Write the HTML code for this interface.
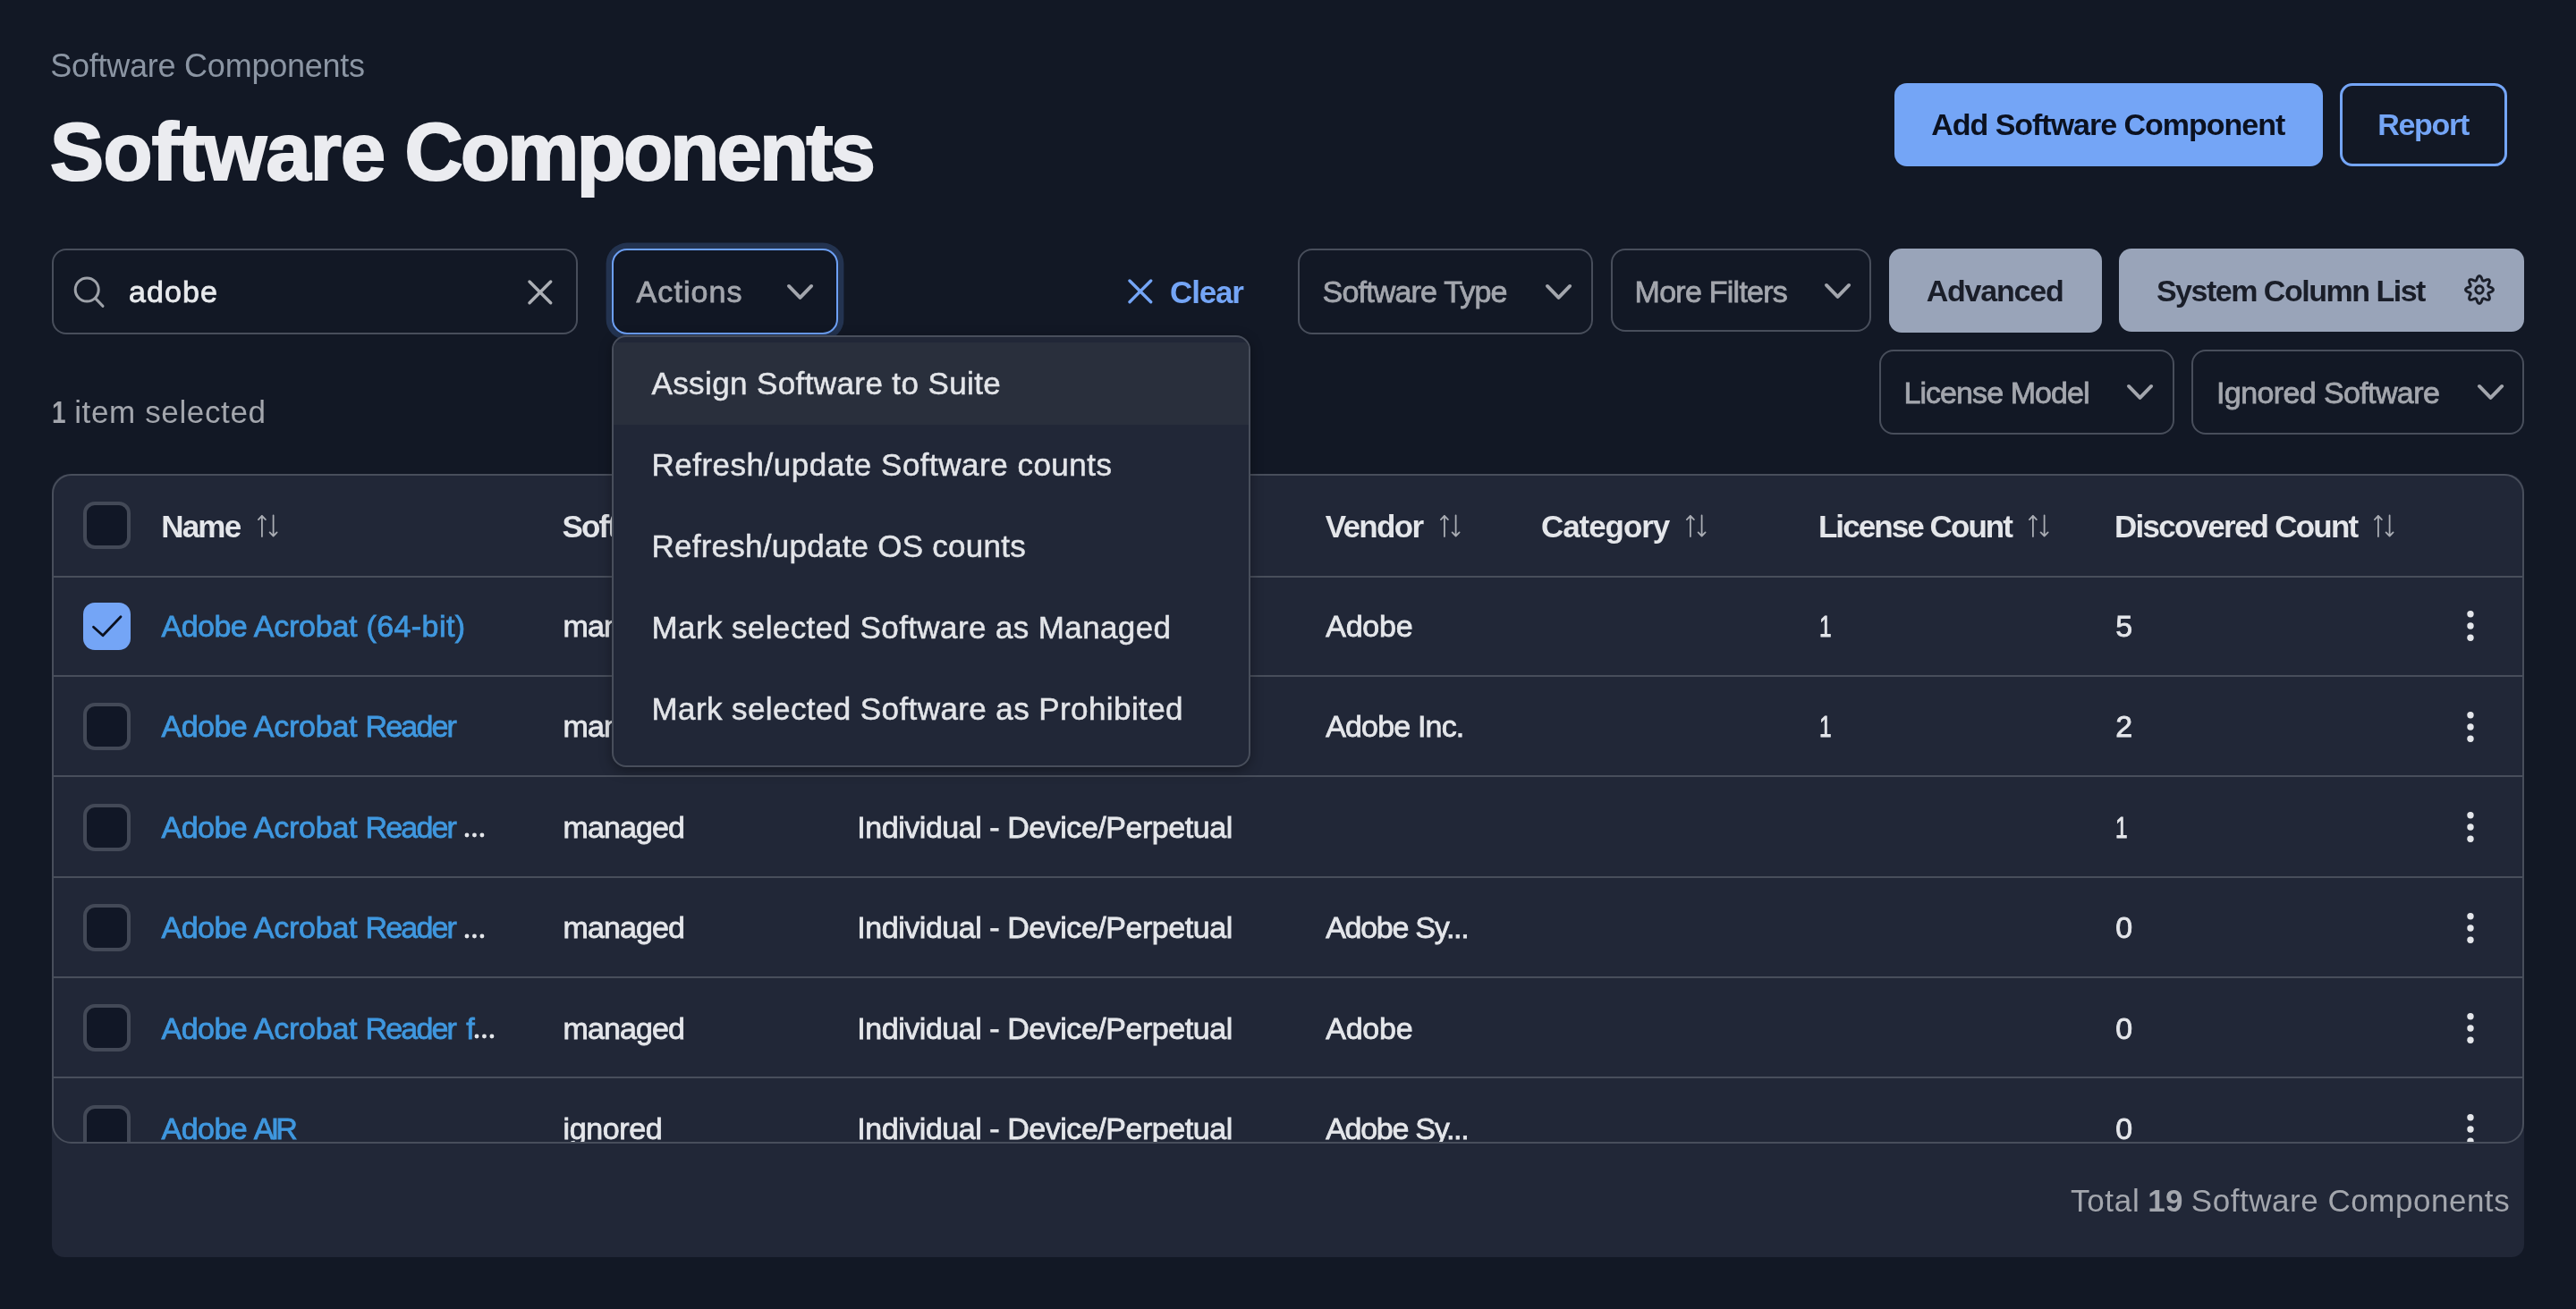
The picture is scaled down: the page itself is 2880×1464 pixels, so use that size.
<!DOCTYPE html>
<html lang="en"><head><meta charset="utf-8"><title>Software Components</title><style>
html,body{margin:0;padding:0}
body{width:2880px;height:1464px;overflow:hidden;background:#121825;font-family:"Liberation Sans",sans-serif;position:relative}
#app{position:absolute;left:0;top:0;width:2880px;height:1464px;will-change:transform;filter:blur(0.55px)}
.t{position:absolute;white-space:nowrap;line-height:1;font-weight:400}
.bx{position:absolute;box-sizing:border-box}
.a{position:absolute;overflow:visible}
.sep{position:absolute;left:0;width:2760px;height:2px;background:#484e5b}
.cb{position:absolute;box-sizing:border-box;width:53px;height:53px;border:4px solid #434957;border-radius:13px;background:#111726}
.cb.on{border:0;background:#74a5f6}
.cb svg{display:block}
</style></head>
<body>
<div id="app">
<span class="t" style="left:56.2px;top:56.1px;font-size:36px;color:#8b95a3;letter-spacing:-0.24px;">Software Components</span>
<span class="t h1" style="left:56.1px;top:124.8px;font-size:90px;color:#ebecf0;font-weight:700;letter-spacing:-0.73px;-webkit-text-stroke:2.2px #ebecf0;">Software</span>
<span class="t h1" style="left:452.5px;top:124.8px;font-size:90px;color:#ebecf0;font-weight:700;letter-spacing:-2.62px;-webkit-text-stroke:2.2px #ebecf0;">Components</span>
<div class="bx" style="left:2118px;top:93px;width:479px;height:93px;background:#74a5f6;border-radius:14px;"></div>
<span class="t" style="left:2159.2px;top:121.9px;font-size:34px;color:#0b1120;font-weight:700;letter-spacing:-1.02px;">Add Software Component</span>
<div class="bx" style="left:2616px;top:93px;width:187px;height:93px;border:3px solid #74a5f6;border-radius:14px;"></div>
<span class="t" style="left:2658.2px;top:121.9px;font-size:34px;color:#74a5f6;font-weight:700;letter-spacing:-1.28px;">Report</span>
<div class="bx" style="left:58px;top:278px;width:588px;height:96px;border:2px solid #484e5b;border-radius:16px;"></div>
<svg class="a" style="left:80px;top:307px" width="40" height="40" viewBox="0 0 40 40"><circle cx="17.2" cy="17" r="13" fill="none" stroke="#9ea2a9" stroke-width="3"/><path d="M26.6 26.6 L35 35.4" stroke="#9ea2a9" stroke-width="3" stroke-linecap="round"/></svg>
<span class="t" style="left:143.9px;top:309.1px;font-size:34px;color:#e8eaed;letter-spacing:1.10px;-webkit-text-stroke:0.8px #e8eaed;">adobe</span>
<svg class="a" style="left:588.7px;top:311.7px" width="29.7" height="29.7" viewBox="-3 -3 29.7 29.7"><path d="M0 0 L23.7 23.7 M23.7 0 L0 23.7" fill="none" stroke="#acafb5" stroke-width="3.5" stroke-linecap="round"/></svg>
<div class="bx" style="left:684px;top:277.8px;width:253.3px;height:96.2px;border:2.6px solid #6da0f4;border-radius:17px;box-shadow:0 0 0 6.4px #233350;background:#111724;"></div>
<span class="t" style="left:711.6px;top:309.1px;font-size:34px;color:#a3a6ad;letter-spacing:1.07px;-webkit-text-stroke:0.8px #a3a6ad;">Actions</span>
<svg class="a" style="left:880.0px;top:317.6px" width="29.1" height="16.8" viewBox="0 0 29.1 16.8"><path d="M1.95 1.95 L14.55 14.85 L27.15 1.95" fill="none" stroke="#a3a6ad" stroke-width="3.9" stroke-linecap="round" stroke-linejoin="round"/></svg>
<svg class="a" style="left:1259.7px;top:310.5px" width="29.7" height="29.7" viewBox="-3 -3 29.7 29.7"><path d="M0 0 L23.7 23.7 M23.7 0 L0 23.7" fill="none" stroke="#74a5f6" stroke-width="3.4" stroke-linecap="round"/></svg>
<span class="t" style="left:1308.0px;top:308.5px;font-size:35px;color:#74a5f6;font-weight:700;letter-spacing:-1.15px;">Clear</span>
<div class="bx" style="left:1451px;top:278px;width:330px;height:96px;border:2px solid #484e5b;border-radius:16px;"></div>
<span class="t" style="left:1478.6px;top:309.1px;font-size:34px;color:#a3a6ad;letter-spacing:-0.82px;-webkit-text-stroke:0.8px #a3a6ad;">Software Type</span>
<svg class="a" style="left:1728.1px;top:317.6px" width="29.1" height="16.8" viewBox="0 0 29.1 16.8"><path d="M1.95 1.95 L14.55 14.85 L27.15 1.95" fill="none" stroke="#a3a6ad" stroke-width="3.9" stroke-linecap="round" stroke-linejoin="round"/></svg>
<div class="bx" style="left:1801px;top:278px;width:291px;height:93px;border:2px solid #484e5b;border-radius:16px;"></div>
<span class="t" style="left:1827.6px;top:309.1px;font-size:34px;color:#a3a6ad;letter-spacing:-0.75px;-webkit-text-stroke:0.8px #a3a6ad;">More Filters</span>
<svg class="a" style="left:2040.2px;top:317.2px" width="29.1" height="16.8" viewBox="0 0 29.1 16.8"><path d="M1.95 1.95 L14.55 14.85 L27.15 1.95" fill="none" stroke="#a3a6ad" stroke-width="3.9" stroke-linecap="round" stroke-linejoin="round"/></svg>
<div class="bx" style="left:2112px;top:278px;width:238px;height:94px;background:#99a4b9;border-radius:14px;"></div>
<span class="t" style="left:2153.7px;top:308.2px;font-size:34px;color:#1a1e29;font-weight:700;letter-spacing:-1.20px;">Advanced</span>
<div class="bx" style="left:2369px;top:278px;width:453px;height:93px;background:#99a4b9;border-radius:14px;"></div>
<span class="t" style="left:2410.9px;top:308.2px;font-size:34px;color:#1a1e29;font-weight:700;letter-spacing:-1.49px;">System Column List</span>
<svg class="a" style="left:2752.1px;top:304.2px" width="40" height="40" viewBox="-20 -20 40 40"><g fill="none" stroke="#1a1e29" stroke-width="2.9" stroke-linejoin="round"><path d="M0.00 -15.45 L0.60 -15.32 L1.18 -14.95 L1.70 -14.36 L2.16 -13.62 L2.55 -12.80 L2.83 -11.78 L3.12 -11.05 L3.41 -10.48 L3.72 -10.08 L4.08 -9.84 L4.50 -9.76 L5.00 -9.82 L5.61 -10.02 L6.33 -10.33 L7.25 -10.85 L8.11 -11.16 L8.95 -11.36 L9.74 -11.40 L10.41 -11.26 L10.92 -10.92 L11.26 -10.41 L11.40 -9.74 L11.36 -8.95 L11.16 -8.11 L10.85 -7.25 L10.33 -6.33 L10.02 -5.61 L9.82 -5.00 L9.76 -4.50 L9.84 -4.08 L10.08 -3.72 L10.48 -3.41 L11.05 -3.12 L11.78 -2.83 L12.80 -2.55 L13.62 -2.16 L14.36 -1.70 L14.95 -1.18 L15.32 -0.60 L15.45 -0.00 L15.32 0.60 L14.95 1.18 L14.36 1.70 L13.62 2.16 L12.80 2.55 L11.78 2.83 L11.05 3.12 L10.48 3.41 L10.08 3.72 L9.84 4.08 L9.76 4.50 L9.82 5.00 L10.02 5.61 L10.33 6.33 L10.85 7.25 L11.16 8.11 L11.36 8.95 L11.40 9.74 L11.26 10.41 L10.92 10.92 L10.41 11.26 L9.74 11.40 L8.95 11.36 L8.11 11.16 L7.25 10.85 L6.33 10.33 L5.61 10.02 L5.00 9.82 L4.50 9.76 L4.08 9.84 L3.72 10.08 L3.41 10.48 L3.12 11.05 L2.83 11.78 L2.55 12.80 L2.16 13.62 L1.70 14.36 L1.18 14.95 L0.60 15.32 L0.00 15.45 L-0.60 15.32 L-1.18 14.95 L-1.70 14.36 L-2.16 13.62 L-2.55 12.80 L-2.83 11.78 L-3.12 11.05 L-3.41 10.48 L-3.72 10.08 L-4.08 9.84 L-4.50 9.76 L-5.00 9.82 L-5.61 10.02 L-6.33 10.33 L-7.25 10.85 L-8.11 11.16 L-8.95 11.36 L-9.74 11.40 L-10.41 11.26 L-10.92 10.92 L-11.26 10.41 L-11.40 9.74 L-11.36 8.95 L-11.16 8.11 L-10.85 7.25 L-10.33 6.33 L-10.02 5.61 L-9.82 5.00 L-9.76 4.50 L-9.84 4.08 L-10.08 3.72 L-10.48 3.41 L-11.05 3.12 L-11.78 2.83 L-12.80 2.55 L-13.62 2.16 L-14.36 1.70 L-14.95 1.18 L-15.32 0.60 L-15.45 0.00 L-15.32 -0.60 L-14.95 -1.18 L-14.36 -1.70 L-13.62 -2.16 L-12.80 -2.55 L-11.78 -2.83 L-11.05 -3.12 L-10.48 -3.41 L-10.08 -3.72 L-9.84 -4.08 L-9.76 -4.50 L-9.82 -5.00 L-10.02 -5.61 L-10.33 -6.33 L-10.85 -7.25 L-11.16 -8.11 L-11.36 -8.95 L-11.40 -9.74 L-11.26 -10.41 L-10.92 -10.92 L-10.41 -11.26 L-9.74 -11.40 L-8.95 -11.36 L-8.11 -11.16 L-7.25 -10.85 L-6.33 -10.33 L-5.61 -10.02 L-5.00 -9.82 L-4.50 -9.76 L-4.08 -9.84 L-3.72 -10.08 L-3.41 -10.48 L-3.12 -11.05 L-2.83 -11.78 L-2.55 -12.80 L-2.16 -13.62 L-1.70 -14.36 L-1.18 -14.95 L-0.60 -15.32Z"/><circle cx="0" cy="0" r="4.2"/></g></svg>
<div class="bx" style="left:2101px;top:391px;width:330px;height:95px;border:2px solid #484e5b;border-radius:16px;"></div>
<span class="t" style="left:2128.4px;top:422.2px;font-size:34px;color:#a3a6ad;letter-spacing:-0.92px;-webkit-text-stroke:0.8px #a3a6ad;">License Model</span>
<svg class="a" style="left:2378.0px;top:430.4px" width="29.1" height="16.8" viewBox="0 0 29.1 16.8"><path d="M1.95 1.95 L14.55 14.85 L27.15 1.95" fill="none" stroke="#a3a6ad" stroke-width="3.9" stroke-linecap="round" stroke-linejoin="round"/></svg>
<div class="bx" style="left:2450px;top:391px;width:372px;height:95px;border:2px solid #484e5b;border-radius:16px;"></div>
<span class="t" style="left:2478.0px;top:422.2px;font-size:34px;color:#a3a6ad;letter-spacing:-0.61px;-webkit-text-stroke:0.8px #a3a6ad;">Ignored Software</span>
<svg class="a" style="left:2770.0px;top:430.4px" width="29.1" height="16.8" viewBox="0 0 29.1 16.8"><path d="M1.95 1.95 L14.55 14.85 L27.15 1.95" fill="none" stroke="#a3a6ad" stroke-width="3.9" stroke-linecap="round" stroke-linejoin="round"/></svg>
<span class="t" style="left:58.0px;top:442.9px;font-size:35px;color:#a3a6ad;font-weight:700;transform:scaleX(.8);transform-origin:0 0;">1</span>
<span class="t" style="left:83.2px;top:442.9px;font-size:35px;color:#a3a6ad;letter-spacing:0.63px;">item selected</span>
<div class="bx" style="left:58px;top:530px;width:2764px;height:876px;background:#212737;border-radius:20px 20px 14px 14px;"></div>
<div class="bx" id="tbl" style="left:58px;top:530px;width:2764px;height:749px;border:2px solid #484e5b;border-radius:22px;overflow:hidden;">
<div class="sep" style="top:111.9px"></div>
<div class="sep" style="top:222.9px"></div>
<div class="sep" style="top:335.4px"></div>
<div class="sep" style="top:447.9px"></div>
<div class="sep" style="top:559.8px"></div>
<div class="sep" style="top:672.3px"></div>
<div class="cb" style="left:33px;top:29.0px"></div>
<span class="t" style="left:120.2px;top:38.6px;font-size:35px;color:#e4e6ea;font-weight:700;letter-spacing:-1.80px;">Name</span>
<svg class="a" style="left:227.0px;top:42.9px" width="25" height="27" viewBox="-1 -1 25 27"><g fill="none" stroke="#a9acb3" stroke-width="1.8" stroke-linecap="round" stroke-linejoin="round"><path d="M4.9 24 V1 M0.9 5.1 L4.9 1 L8.9 5.1"/><path d="M17.6 0.5 V23.5 M13.6 19.4 L17.6 23.5 L21.6 19.4"/></g></svg>
<span class="t" style="left:568.6px;top:38.6px;font-size:35px;color:#e4e6ea;font-weight:700;letter-spacing:-1.87px;">Software Type</span>
<svg class="a" style="left:801.0px;top:42.9px" width="25" height="27" viewBox="-1 -1 25 27"><g fill="none" stroke="#a9acb3" stroke-width="1.8" stroke-linecap="round" stroke-linejoin="round"><path d="M4.9 24 V1 M0.9 5.1 L4.9 1 L8.9 5.1"/><path d="M17.6 0.5 V23.5 M13.6 19.4 L17.6 23.5 L21.6 19.4"/></g></svg>
<span class="t" style="left:897.9px;top:38.6px;font-size:35px;color:#e4e6ea;font-weight:700;letter-spacing:-2.20px;">License Model</span>
<svg class="a" style="left:1129.0px;top:42.9px" width="25" height="27" viewBox="-1 -1 25 27"><g fill="none" stroke="#a9acb3" stroke-width="1.8" stroke-linecap="round" stroke-linejoin="round"><path d="M4.9 24 V1 M0.9 5.1 L4.9 1 L8.9 5.1"/><path d="M17.6 0.5 V23.5 M13.6 19.4 L17.6 23.5 L21.6 19.4"/></g></svg>
<span class="t" style="left:1421.8px;top:38.6px;font-size:35px;color:#e4e6ea;font-weight:700;letter-spacing:-1.68px;">Vendor</span>
<svg class="a" style="left:1549.0px;top:42.9px" width="25" height="27" viewBox="-1 -1 25 27"><g fill="none" stroke="#a9acb3" stroke-width="1.8" stroke-linecap="round" stroke-linejoin="round"><path d="M4.9 24 V1 M0.9 5.1 L4.9 1 L8.9 5.1"/><path d="M17.6 0.5 V23.5 M13.6 19.4 L17.6 23.5 L21.6 19.4"/></g></svg>
<span class="t" style="left:1663.0px;top:38.6px;font-size:35px;color:#e4e6ea;font-weight:700;letter-spacing:-1.06px;">Category</span>
<svg class="a" style="left:1824.0px;top:42.9px" width="25" height="27" viewBox="-1 -1 25 27"><g fill="none" stroke="#a9acb3" stroke-width="1.8" stroke-linecap="round" stroke-linejoin="round"><path d="M4.9 24 V1 M0.9 5.1 L4.9 1 L8.9 5.1"/><path d="M17.6 0.5 V23.5 M13.6 19.4 L17.6 23.5 L21.6 19.4"/></g></svg>
<span class="t" style="left:1972.9px;top:38.6px;font-size:35px;color:#e4e6ea;font-weight:700;letter-spacing:-1.92px;">License Count</span>
<svg class="a" style="left:2207.0px;top:42.9px" width="25" height="27" viewBox="-1 -1 25 27"><g fill="none" stroke="#a9acb3" stroke-width="1.8" stroke-linecap="round" stroke-linejoin="round"><path d="M4.9 24 V1 M0.9 5.1 L4.9 1 L8.9 5.1"/><path d="M17.6 0.5 V23.5 M13.6 19.4 L17.6 23.5 L21.6 19.4"/></g></svg>
<span class="t" style="left:2304.1px;top:38.6px;font-size:35px;color:#e4e6ea;font-weight:700;letter-spacing:-1.76px;">Discovered Count</span>
<svg class="a" style="left:2593.2px;top:42.9px" width="25" height="27" viewBox="-1 -1 25 27"><g fill="none" stroke="#a9acb3" stroke-width="1.8" stroke-linecap="round" stroke-linejoin="round"><path d="M4.9 24 V1 M0.9 5.1 L4.9 1 L8.9 5.1"/><path d="M17.6 0.5 V23.5 M13.6 19.4 L17.6 23.5 L21.6 19.4"/></g></svg>
<div class="cb on" style="left:33px;top:141.6px"><svg width="53" height="53" viewBox="0 0 53 53"><path d="M11.5 27.3 L22 36.8 L42 15.8" fill="none" stroke="#0b1120" stroke-width="2.8" stroke-linecap="round" stroke-linejoin="round"/></svg></div>
<span class="t" style="left:120.6px;top:150.9px;font-size:34px;color:#3f97de;letter-spacing:-0.57px;-webkit-text-stroke:0.8px #3f97de;">Adobe</span>
<span class="t" style="left:223.7px;top:150.9px;font-size:34px;color:#3f97de;letter-spacing:-0.22px;-webkit-text-stroke:0.8px #3f97de;">Acrobat</span>
<span class="t" style="left:349.4px;top:150.9px;font-size:34px;color:#3f97de;letter-spacing:0.44px;-webkit-text-stroke:0.8px #3f97de;">(64-bit)</span>
<span class="t" style="left:569.5px;top:150.9px;font-size:34px;color:#e4e6ea;letter-spacing:-0.90px;-webkit-text-stroke:0.8px #e4e6ea;">managed</span>
<span class="t" style="left:898.3px;top:150.9px;font-size:34px;color:#e4e6ea;letter-spacing:-0.46px;-webkit-text-stroke:0.8px #e4e6ea;">Individual - Device/Perpetual</span>
<span class="t" style="left:1422.2px;top:150.9px;font-size:34px;color:#e4e6ea;letter-spacing:-0.20px;-webkit-text-stroke:0.8px #e4e6ea;">Adobe</span>
<span class="t" style="left:1973.6px;top:150.9px;font-size:34px;color:#e4e6ea;-webkit-text-stroke:0.8px #e4e6ea;transform:scaleX(.72);transform-origin:0 0;">1</span>
<span class="t" style="left:2305.3px;top:150.9px;font-size:34px;color:#e4e6ea;-webkit-text-stroke:0.8px #e4e6ea;">5</span>
<svg class="a" style="left:2697.4px;top:150.3px" width="10" height="36" viewBox="-5 -18 10 36"><circle cx="0" cy="-13.2" r="3.7" fill="#e4e6ea"/><circle cx="0" cy="0" r="3.7" fill="#e4e6ea"/><circle cx="0" cy="13.2" r="3.7" fill="#e4e6ea"/></svg>
<div class="cb" style="left:33px;top:254.1px"></div>
<span class="t" style="left:120.6px;top:263.4px;font-size:34px;color:#3f97de;letter-spacing:-0.57px;-webkit-text-stroke:0.8px #3f97de;">Adobe</span>
<span class="t" style="left:223.7px;top:263.4px;font-size:34px;color:#3f97de;letter-spacing:-0.22px;-webkit-text-stroke:0.8px #3f97de;">Acrobat</span>
<span class="t" style="left:348.6px;top:263.4px;font-size:34px;color:#3f97de;letter-spacing:-1.86px;-webkit-text-stroke:0.8px #3f97de;">Reader</span>
<span class="t" style="left:569.5px;top:263.4px;font-size:34px;color:#e4e6ea;letter-spacing:-0.90px;-webkit-text-stroke:0.8px #e4e6ea;">managed</span>
<span class="t" style="left:898.3px;top:263.4px;font-size:34px;color:#e4e6ea;letter-spacing:-0.46px;-webkit-text-stroke:0.8px #e4e6ea;">Individual - Device/Perpetual</span>
<span class="t" style="left:1422.2px;top:263.4px;font-size:34px;color:#e4e6ea;letter-spacing:-0.83px;-webkit-text-stroke:0.8px #e4e6ea;">Adobe Inc.</span>
<span class="t" style="left:1973.6px;top:263.4px;font-size:34px;color:#e4e6ea;-webkit-text-stroke:0.8px #e4e6ea;transform:scaleX(.72);transform-origin:0 0;">1</span>
<span class="t" style="left:2305.3px;top:263.4px;font-size:34px;color:#e4e6ea;-webkit-text-stroke:0.8px #e4e6ea;">2</span>
<svg class="a" style="left:2697.4px;top:262.75000000000006px" width="10" height="36" viewBox="-5 -18 10 36"><circle cx="0" cy="-13.2" r="3.7" fill="#e4e6ea"/><circle cx="0" cy="0" r="3.7" fill="#e4e6ea"/><circle cx="0" cy="13.2" r="3.7" fill="#e4e6ea"/></svg>
<div class="cb" style="left:33px;top:366.5px"></div>
<span class="t" style="left:120.6px;top:375.9px;font-size:34px;color:#3f97de;letter-spacing:-0.57px;-webkit-text-stroke:0.8px #3f97de;">Adobe</span>
<span class="t" style="left:223.7px;top:375.9px;font-size:34px;color:#3f97de;letter-spacing:-0.22px;-webkit-text-stroke:0.8px #3f97de;">Acrobat</span>
<span class="t" style="left:348.6px;top:375.9px;font-size:34px;color:#3f97de;letter-spacing:-1.86px;-webkit-text-stroke:0.8px #3f97de;">Reader</span>
<svg class="a" style="left:459.3px;top:399.2px" width="23" height="6" viewBox="-3 -3 23 6"><circle cx="0" cy="0" r="2.45" fill="#e4e6ea"/><circle cx="8.45" cy="0" r="2.45" fill="#e4e6ea"/><circle cx="16.9" cy="0" r="2.45" fill="#e4e6ea"/></svg>
<span class="t" style="left:569.5px;top:375.9px;font-size:34px;color:#e4e6ea;letter-spacing:-0.90px;-webkit-text-stroke:0.8px #e4e6ea;">managed</span>
<span class="t" style="left:898.3px;top:375.9px;font-size:34px;color:#e4e6ea;letter-spacing:-0.46px;-webkit-text-stroke:0.8px #e4e6ea;">Individual - Device/Perpetual</span>
<span class="t" style="left:2305.3px;top:375.9px;font-size:34px;color:#e4e6ea;-webkit-text-stroke:0.8px #e4e6ea;transform:scaleX(.72);transform-origin:0 0;">1</span>
<svg class="a" style="left:2697.4px;top:375.2px" width="10" height="36" viewBox="-5 -18 10 36"><circle cx="0" cy="-13.2" r="3.7" fill="#e4e6ea"/><circle cx="0" cy="0" r="3.7" fill="#e4e6ea"/><circle cx="0" cy="13.2" r="3.7" fill="#e4e6ea"/></svg>
<div class="cb" style="left:33px;top:479.0px"></div>
<span class="t" style="left:120.6px;top:488.4px;font-size:34px;color:#3f97de;letter-spacing:-0.57px;-webkit-text-stroke:0.8px #3f97de;">Adobe</span>
<span class="t" style="left:223.7px;top:488.4px;font-size:34px;color:#3f97de;letter-spacing:-0.22px;-webkit-text-stroke:0.8px #3f97de;">Acrobat</span>
<span class="t" style="left:348.6px;top:488.4px;font-size:34px;color:#3f97de;letter-spacing:-1.86px;-webkit-text-stroke:0.8px #3f97de;">Reader</span>
<svg class="a" style="left:459.3px;top:511.7px" width="23" height="6" viewBox="-3 -3 23 6"><circle cx="0" cy="0" r="2.45" fill="#e4e6ea"/><circle cx="8.45" cy="0" r="2.45" fill="#e4e6ea"/><circle cx="16.9" cy="0" r="2.45" fill="#e4e6ea"/></svg>
<span class="t" style="left:569.5px;top:488.4px;font-size:34px;color:#e4e6ea;letter-spacing:-0.90px;-webkit-text-stroke:0.8px #e4e6ea;">managed</span>
<span class="t" style="left:898.3px;top:488.4px;font-size:34px;color:#e4e6ea;letter-spacing:-0.46px;-webkit-text-stroke:0.8px #e4e6ea;">Individual - Device/Perpetual</span>
<span class="t" style="left:1422.2px;top:488.4px;font-size:34px;color:#e4e6ea;letter-spacing:-1.27px;-webkit-text-stroke:0.8px #e4e6ea;">Adobe Sy...</span>
<span class="t" style="left:2305.3px;top:488.4px;font-size:34px;color:#e4e6ea;-webkit-text-stroke:0.8px #e4e6ea;">0</span>
<svg class="a" style="left:2697.4px;top:487.65000000000003px" width="10" height="36" viewBox="-5 -18 10 36"><circle cx="0" cy="-13.2" r="3.7" fill="#e4e6ea"/><circle cx="0" cy="0" r="3.7" fill="#e4e6ea"/><circle cx="0" cy="13.2" r="3.7" fill="#e4e6ea"/></svg>
<div class="cb" style="left:33px;top:591.4px"></div>
<span class="t" style="left:120.6px;top:600.9px;font-size:34px;color:#3f97de;letter-spacing:-0.57px;-webkit-text-stroke:0.8px #3f97de;">Adobe</span>
<span class="t" style="left:223.7px;top:600.9px;font-size:34px;color:#3f97de;letter-spacing:-0.22px;-webkit-text-stroke:0.8px #3f97de;">Acrobat</span>
<span class="t" style="left:348.6px;top:600.9px;font-size:34px;color:#3f97de;letter-spacing:-1.86px;-webkit-text-stroke:0.8px #3f97de;">Reader</span>
<span class="t" style="left:461.2px;top:600.9px;font-size:34px;color:#3f97de;-webkit-text-stroke:0.8px #3f97de;">f</span>
<svg class="a" style="left:470.4px;top:624.2px" width="23" height="6" viewBox="-3 -3 23 6"><circle cx="0" cy="0" r="2.45" fill="#e4e6ea"/><circle cx="8.45" cy="0" r="2.45" fill="#e4e6ea"/><circle cx="16.9" cy="0" r="2.45" fill="#e4e6ea"/></svg>
<span class="t" style="left:569.5px;top:600.9px;font-size:34px;color:#e4e6ea;letter-spacing:-0.90px;-webkit-text-stroke:0.8px #e4e6ea;">managed</span>
<span class="t" style="left:898.3px;top:600.9px;font-size:34px;color:#e4e6ea;letter-spacing:-0.46px;-webkit-text-stroke:0.8px #e4e6ea;">Individual - Device/Perpetual</span>
<span class="t" style="left:1422.2px;top:600.9px;font-size:34px;color:#e4e6ea;letter-spacing:-0.20px;-webkit-text-stroke:0.8px #e4e6ea;">Adobe</span>
<span class="t" style="left:2305.3px;top:600.9px;font-size:34px;color:#e4e6ea;-webkit-text-stroke:0.8px #e4e6ea;">0</span>
<svg class="a" style="left:2697.4px;top:600.1000000000001px" width="10" height="36" viewBox="-5 -18 10 36"><circle cx="0" cy="-13.2" r="3.7" fill="#e4e6ea"/><circle cx="0" cy="0" r="3.7" fill="#e4e6ea"/><circle cx="0" cy="13.2" r="3.7" fill="#e4e6ea"/></svg>
<div class="cb" style="left:33px;top:703.8px"></div>
<span class="t" style="left:120.6px;top:713.4px;font-size:34px;color:#3f97de;letter-spacing:-0.57px;-webkit-text-stroke:0.8px #3f97de;">Adobe</span>
<span class="t" style="left:223.8px;top:713.4px;font-size:34px;color:#3f97de;letter-spacing:-3.80px;-webkit-text-stroke:0.8px #3f97de;">AIR</span>
<span class="t" style="left:569.5px;top:713.4px;font-size:34px;color:#e4e6ea;letter-spacing:-0.37px;-webkit-text-stroke:0.8px #e4e6ea;">ignored</span>
<span class="t" style="left:898.3px;top:713.4px;font-size:34px;color:#e4e6ea;letter-spacing:-0.46px;-webkit-text-stroke:0.8px #e4e6ea;">Individual - Device/Perpetual</span>
<span class="t" style="left:1422.2px;top:713.4px;font-size:34px;color:#e4e6ea;letter-spacing:-1.27px;-webkit-text-stroke:0.8px #e4e6ea;">Adobe Sy...</span>
<span class="t" style="left:2305.3px;top:713.4px;font-size:34px;color:#e4e6ea;-webkit-text-stroke:0.8px #e4e6ea;">0</span>
<svg class="a" style="left:2697.4px;top:712.55px" width="10" height="36" viewBox="-5 -18 10 36"><circle cx="0" cy="-13.2" r="3.7" fill="#e4e6ea"/><circle cx="0" cy="0" r="3.7" fill="#e4e6ea"/><circle cx="0" cy="13.2" r="3.7" fill="#e4e6ea"/></svg>
</div>
<span class="t" style="left:2315.0px;top:1325.1px;font-size:35px;color:#a3a6ad;letter-spacing:0.70px;">Total</span>
<span class="t" style="left:2401.2px;top:1325.1px;font-size:35px;color:#a3a6ad;font-weight:700;letter-spacing:0.40px;">19</span>
<span class="t" style="left:2449.8px;top:1325.1px;font-size:35px;color:#a3a6ad;letter-spacing:0.53px;">Software Components</span>
<div class="bx" id="menu" style="left:684px;top:375px;width:714px;height:483px;background:#212737;border:2px solid #484e5b;border-radius:16px;box-shadow:0 4px 14px rgba(0,0,0,.35);overflow:hidden;"><div class="bx" style="left:0;top:6px;width:710px;height:92px;background:#292f3c"></div></div>
<span class="t" style="left:728.5px;top:411.0px;font-size:35px;color:#e3e5e9;letter-spacing:0.39px;-webkit-text-stroke:0.5px #e3e5e9;">Assign Software to Suite</span>
<span class="t" style="left:728.5px;top:502.0px;font-size:35px;color:#e3e5e9;letter-spacing:0.50px;-webkit-text-stroke:0.5px #e3e5e9;">Refresh/update Software counts</span>
<span class="t" style="left:728.5px;top:593.0px;font-size:35px;color:#e3e5e9;letter-spacing:0.25px;-webkit-text-stroke:0.5px #e3e5e9;">Refresh/update OS counts</span>
<span class="t" style="left:728.5px;top:684.0px;font-size:35px;color:#e3e5e9;letter-spacing:0.39px;-webkit-text-stroke:0.5px #e3e5e9;">Mark selected Software as Managed</span>
<span class="t" style="left:728.5px;top:775.0px;font-size:35px;color:#e3e5e9;letter-spacing:0.41px;-webkit-text-stroke:0.5px #e3e5e9;">Mark selected Software as Prohibited</span>
</div>
</body></html>
